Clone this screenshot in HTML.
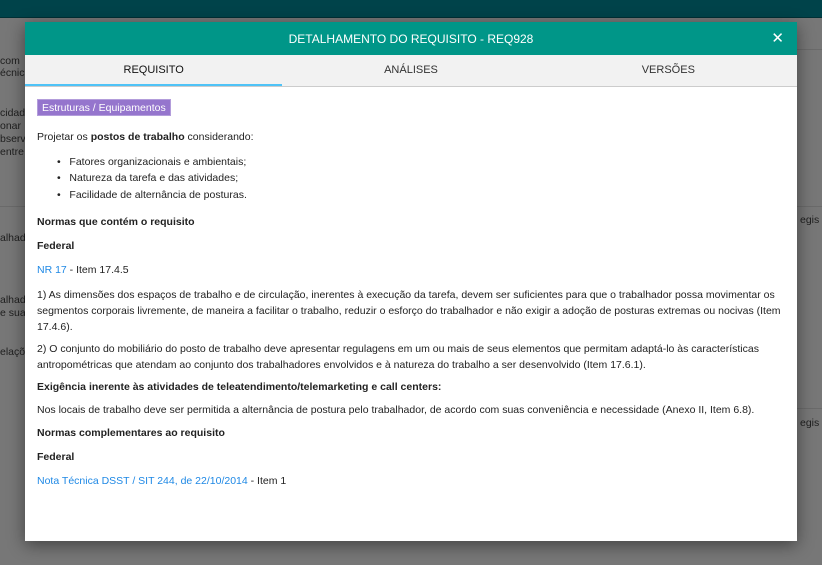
<!DOCTYPE html>
<html><head><meta charset="utf-8"><style>
*{margin:0;padding:0;box-sizing:border-box}
body{width:822px;height:565px;overflow:hidden;background:#777;font-family:"Liberation Sans",sans-serif;position:relative;color:#222}
.top{position:absolute;left:0;top:0;width:822px;height:18px;background:#00434a;border-bottom:1px solid #003035}
.bg{position:absolute;font-size:10.5px;color:#1e1e1e;white-space:nowrap}
.hl{position:absolute;height:1px;background:#6a6a6a}
.modal{position:absolute;left:25px;top:22px;width:772px;height:519px;background:#fff;box-shadow:0 4px 16px rgba(0,0,0,.45)}
.hdr{height:33px;background:#009688;color:#fff;font-size:12px;text-align:center;line-height:34px;position:relative}
.x{position:absolute;right:13px;top:0;font-size:15px}
.tabs{display:flex;height:32px;background:#f2f2f2;border-bottom:1px solid #ccc}
.tabs div{flex:1;text-align:center;font-size:11px;line-height:31px;color:#333}
.tabs .a{border-bottom:2px solid #4fc3f7;color:#111}
.t{position:absolute;left:12px;font-size:10.5px;line-height:16px;color:#222;white-space:nowrap}
.b{font-weight:bold}
a{color:#1e88e5;text-decoration:none}
.tag{position:absolute;left:12px;top:77px;background:#9575cd;color:#fff;font-size:10.5px;padding:0 4px;height:17px;line-height:16px;border:1px solid #b39ddb}
</style></head><body>
<div class="top"></div>
<div class="bg" style="left:0;top:55px">com</div>
<div class="bg" style="left:0;top:67px">écnica</div>
<div class="bg" style="left:0;top:107px">cidade</div>
<div class="bg" style="left:0;top:120px">onar</div>
<div class="bg" style="left:0;top:133px">bserv</div>
<div class="bg" style="left:0;top:146px">entre</div>
<div class="bg" style="left:0;top:232px">alhado</div>
<div class="bg" style="left:0;top:294px">alhad</div>
<div class="bg" style="left:0;top:307px">e suas</div>
<div class="bg" style="left:0;top:346px">elaçõ</div>
<div class="bg" style="left:800px;top:214px">egis :</div>
<div class="bg" style="left:800px;top:417px">egis :</div>
<div class="hl" style="left:0;top:206px;width:25px"></div>
<div class="hl" style="left:797px;top:206px;width:25px"></div>
<div class="hl" style="left:797px;top:49px;width:25px"></div>
<div class="hl" style="left:797px;top:408px;width:25px"></div>
<div class="modal">
<div class="hdr">DETALHAMENTO DO REQUISITO - REQ928<span class="x">✕</span></div>
<div class="tabs"><div class="a">REQUISITO</div><div>ANÁLISES</div><div>VERSÕES</div></div>
<div class="tag">Estruturas / Equipamentos</div>
<div class="t" style="top:107px">Projetar os <span class="b">postos de trabalho</span> considerando:</div>
<div class="t" style="left:32px;top:132px">•&nbsp;&nbsp; Fatores organizacionais e ambientais;</div>
<div class="t" style="left:32px;top:148px">•&nbsp;&nbsp; Natureza da tarefa e das atividades;</div>
<div class="t" style="left:32px;top:165px">•&nbsp;&nbsp; Facilidade de alternância de posturas.</div>
<div class="t b" style="top:192px">Normas que contém o requisito</div>
<div class="t b" style="top:216px">Federal</div>
<div class="t" style="top:240px"><a>NR 17</a> - Item 17.4.5</div>
<div class="t" style="top:265px">1) As dimensões dos espaços de trabalho e de circulação, inerentes à execução da tarefa, devem ser suficientes para que o trabalhador possa movimentar os</div>
<div class="t" style="top:281px">segmentos corporais livremente, de maneira a facilitar o trabalho, reduzir o esforço do trabalhador e não exigir a adoção de posturas extremas ou nocivas (Item</div>
<div class="t" style="top:297px">17.4.6).</div>
<div class="t" style="top:319px">2) O conjunto do mobiliário do posto de trabalho deve apresentar regulagens em um ou mais de seus elementos que permitam adaptá-lo às características</div>
<div class="t" style="top:335px">antropométricas que atendam ao conjunto dos trabalhadores envolvidos e à natureza do trabalho a ser desenvolvido (Item 17.6.1).</div>
<div class="t b" style="top:357px">Exigência inerente às atividades de teleatendimento/telemarketing e call centers:</div>
<div class="t" style="top:380px">Nos locais de trabalho deve ser permitida a alternância de postura pelo trabalhador, de acordo com suas conveniência e necessidade (Anexo II, Item 6.8).</div>
<div class="t b" style="top:403px">Normas complementares ao requisito</div>
<div class="t b" style="top:427px">Federal</div>
<div class="t" style="top:451px"><a>Nota Técnica DSST / SIT 244, de 22/10/2014</a> - Item 1</div>
</div>
</body></html>
